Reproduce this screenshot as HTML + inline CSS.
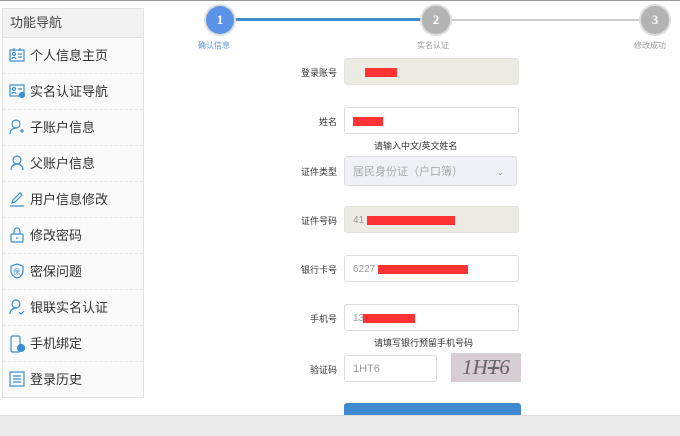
<!DOCTYPE html><html><head><meta charset="utf-8"><style>
body{margin:0;width:680px;height:435px;overflow:hidden;background:#fff;font-family:"Liberation Sans","Noto Sans CJK SC",sans-serif;position:relative}
.a{position:absolute}
.side{left:2px;top:8px;width:140px;height:388px;border:1px solid #e2e2e2;background:#fafafa}
.hd{height:28px;background:#f2f2f2;border-bottom:1px solid #e0e0e0;font-size:13px;color:#444;line-height:28px;padding-left:7px}
.it{height:35px;border-bottom:1px dashed #e6e6e6;font-size:13px;color:#333;line-height:35px;padding-left:27px;position:relative}
.it svg{position:absolute;left:6px;top:9px}
.lbl{font-size:9px;color:#333;text-align:right;width:60px;left:277px}
.in{left:344px;width:175px;height:27px;border:1px solid #ddd;border-radius:3px;background:#fff;font-size:10px;color:#999;line-height:27px;padding-left:8px;box-sizing:border-box}
.red{background:#f33;height:9px}
.hint{font-size:9px;color:#333}
.c{width:28px;height:28px;border-radius:50%;color:#fff;font-weight:bold;font-size:13px;text-align:center;line-height:28px;font-family:"Liberation Serif",serif;box-shadow:0 0 0 2px #ddd}
</style></head><body>
<div class="a" style="left:0;top:0;width:680px;height:1px;background:#999"></div>
<div class="a side">
<div class="hd">功能导航</div>
<div class="it"><svg width="16" height="16" viewBox="0 0 16 16" fill="none" stroke="#3a8fd0" stroke-width="1.2"><rect x="1" y="3" width="14" height="11"/><circle cx="5" cy="7" r="1.5"/><path d="M3 12c0-2 4-2 4 0M9 7h4M9 10h4M5 1v3M11 1v3"/></svg>个人信息主页</div>
<div class="it"><svg width="16" height="16" viewBox="0 0 16 16" fill="none" stroke="#3a8fd0" stroke-width="1.2"><rect x="1" y="2" width="14" height="11"/><circle cx="5" cy="6" r="1.5"/><path d="M3 11c0-2 4-2 4 0M9 6h4"/><circle cx="13" cy="12" r="2.5" fill="#3a8fd0"/></svg>实名认证导航</div>
<div class="it"><svg width="16" height="16" viewBox="0 0 16 16" fill="none" stroke="#3a8fd0" stroke-width="1.2"><circle cx="7" cy="5" r="4"/><path d="M1 15c0-4 3-6 6-6M11 12h4M13 10v4"/></svg>子账户信息</div>
<div class="it"><svg width="16" height="16" viewBox="0 0 16 16" fill="none" stroke="#3a8fd0" stroke-width="1.2"><circle cx="8" cy="5" r="4"/><path d="M2 15c0-4 3-6 6-6s6 2 6 6"/></svg>父账户信息</div>
<div class="it"><svg width="16" height="16" viewBox="0 0 16 16" fill="none" stroke="#3a8fd0" stroke-width="1.2"><path d="M3 12l1-3 7-7 2 2-7 7zM1 15h14"/></svg>用户信息修改</div>
<div class="it"><svg width="16" height="16" viewBox="0 0 16 16" fill="none" stroke="#3a8fd0" stroke-width="1.2"><rect x="2" y="7" width="12" height="8" rx="1"/><path d="M5 7V4a3 3 0 016 0v3M8 10v2"/></svg>修改密码</div>
<div class="it"><svg width="16" height="16" viewBox="0 0 16 16" fill="none" stroke="#3a8fd0" stroke-width="1.2"><path d="M8 1l6 2v5c0 4-3 6-6 7-3-1-6-3-6-7V3z"/><text x="4" y="11" font-size="7" fill="#3a8fd0" stroke="none">保</text></svg>密保问题</div>
<div class="it"><svg width="16" height="16" viewBox="0 0 16 16" fill="none" stroke="#3a8fd0" stroke-width="1.2"><circle cx="7" cy="5" r="4"/><path d="M1 15c0-4 3-6 6-6M10 13l2 2 3-3"/></svg>银联实名认证</div>
<div class="it"><svg width="16" height="18" viewBox="0 0 16 18" fill="none" stroke="#3a8fd0" stroke-width="1.2"><rect x="2" y="1" width="9" height="16" rx="1.5"/><circle cx="12" cy="13" r="3.5" fill="#3a8fd0"/></svg>手机绑定</div>
<div class="it" style="border-bottom:none"><svg width="16" height="16" viewBox="0 0 16 16" fill="none" stroke="#3a8fd0" stroke-width="1.2"><rect x="1" y="1" width="14" height="14"/><path d="M4 5h8M4 8h8M4 11h8"/></svg>登录历史</div>
</div>
<div class="a" style="left:234px;top:18px;width:190px;height:3px;background:#3e8bd0"></div>
<div class="a" style="left:450px;top:19px;width:192px;height:2px;background:#ccc"></div>
<div class="a c" style="left:206px;top:6px;background:#5b93e6">1</div>
<div class="a c" style="left:422px;top:6px;background:#b3b3b3">2</div>
<div class="a c" style="left:641px;top:6px;background:#b3b3b3">3</div>
<div class="a" style="left:198px;top:40px;font-size:8px;color:#5b93e6">确认信息</div>
<div class="a" style="left:417px;top:40px;font-size:8px;color:#999">实名认证</div>
<div class="a" style="left:634px;top:40px;font-size:8px;color:#999">修改成功</div>

<div class="a lbl" style="top:66px">登录账号</div>
<div class="a in" style="top:58px;background:#ebebe4;border-color:#e4e4dc"><div class="a red" style="left:20px;top:9px;width:32px"></div></div>
<div class="a lbl" style="top:115px">姓名</div>
<div class="a in" style="top:107px"><div class="a red" style="left:8px;top:9px;width:30px"></div></div>
<div class="a hint" style="left:374px;top:139px">请输入中文/英文姓名</div>
<div class="a lbl" style="top:165px">证件类型</div>
<div class="a in" style="top:156px;width:173px;height:30px;line-height:30px;background:#f0f1f6;border-color:#ddd;color:#aaa;font-size:11px">居民身份证（户口簿）<span style="position:absolute;right:12px;font-size:9px;color:#888">⌄</span></div>
<div class="a lbl" style="top:214px">证件号码</div>
<div class="a in" style="top:206px;background:#ebebe4;border-color:#e4e4dc">41<div class="a red" style="left:22px;top:9px;width:88px"></div></div>
<div class="a lbl" style="top:263px">银行卡号</div>
<div class="a in" style="top:255px">6227<div class="a red" style="left:33px;top:9px;width:90px"></div></div>
<div class="a lbl" style="top:312px">手机号</div>
<div class="a in" style="top:304px">13<div class="a red" style="left:18px;top:9px;width:52px"></div></div>
<div class="a hint" style="left:374px;top:336px">请填写银行预留手机号码</div>
<div class="a lbl" style="top:363px">验证码</div>
<div class="a in" style="top:355px;width:93px;font-size:11px">1HT6</div>
<div class="a" style="left:451px;top:353px;width:70px;height:29px;background:#d9cdd4;font-family:'Liberation Serif',serif;font-style:italic;font-size:21px;color:#666;text-align:center;line-height:29px">1H<span style="text-decoration:line-through">T</span>6</div>
<div class="a" style="left:344px;top:403px;width:177px;height:13px;background:#3e8bd0;border-radius:3px 3px 0 0"></div>
<div class="a" style="left:0;top:415px;width:680px;height:20px;background:#ececec;border-top:1px solid #ddd"></div>
</body></html>
